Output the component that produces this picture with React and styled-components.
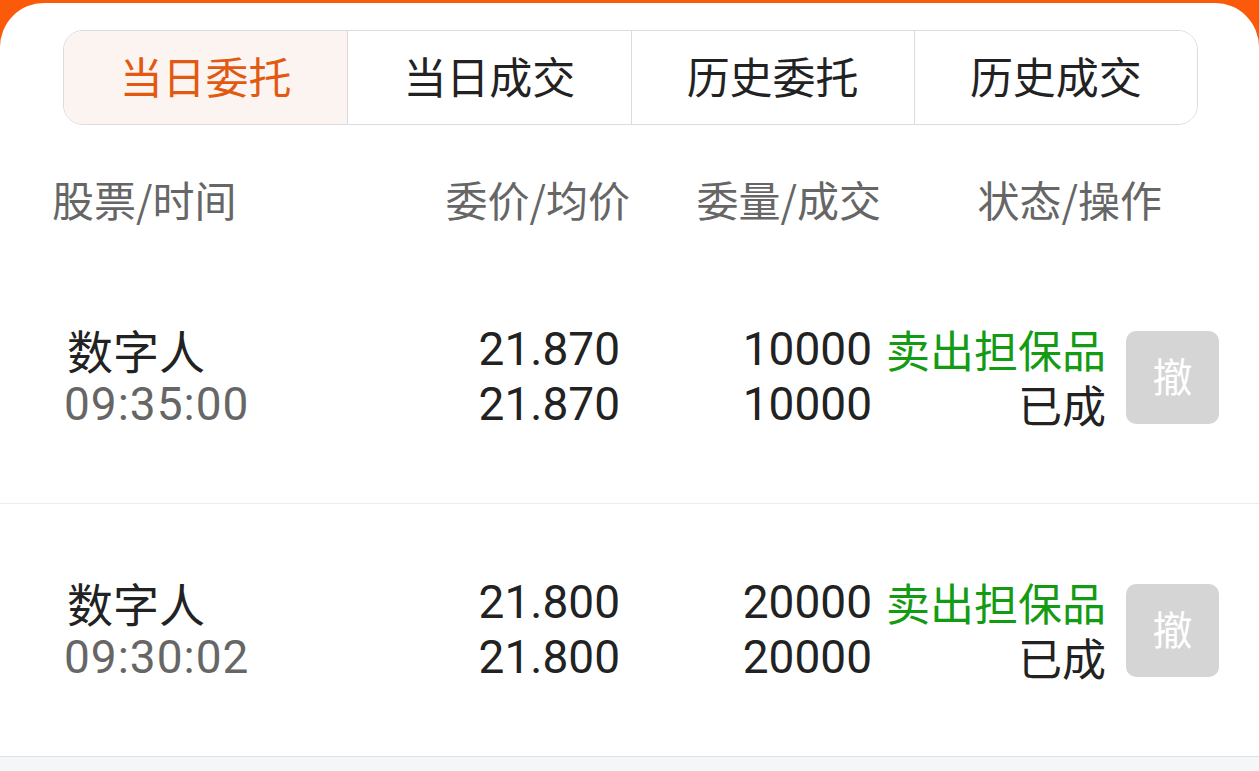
import React from "react";
import styled, { createGlobalStyle } from "styled-components";

const Global = createGlobalStyle`
  html, body { margin: 0; padding: 0; background: #fa5a0a; }
  body { font-family: Roboto, "Noto Sans CJK SC", sans-serif; -webkit-font-smoothing: antialiased; }
  * { box-sizing: border-box; }
`;

const Page = styled.div`
  width: 1259px;
  height: 771px;
  padding-top: 3px;
  background: #fa5a0a;
  overflow: hidden;
`;

const Panel = styled.div`
  height: 768px;
  background: #fff;
  border-radius: 44px 44px 0 0;
  display: flex;
  flex-direction: column;
  padding-top: 27px;
`;

const Tabs = styled.div`
  margin: 0 61px 0 63px;
  height: 95px;
  border: 1px solid #dcdcdf;
  border-radius: 20px;
  display: grid;
  grid-template-columns: repeat(4, 1fr);
  overflow: hidden;
`;

const Tab = styled.div`
  display: flex;
  align-items: center;
  justify-content: center;
  padding-bottom: 5px;
  font-family: "Noto Sans CJK SC", sans-serif;
  font-size: 43px;
  color: ${p => (p.$active ? "#e25a12" : "#222")};
  background: ${p => (p.$active ? "#fcf4f1" : "#fff")};
  border-left: ${p => (p.$first ? "none" : "1px solid #dcdcdf")};
`;

const Header = styled.div`
  height: 126px;
  display: grid;
  grid-template-columns: 348px 230px 251px 281px;
  padding: 20px 0 0 52px;
  align-items: center;
  font-family: "Noto Sans CJK SC", sans-serif;
  font-size: 42px;
  color: #666;
`;

const HeadCell = styled.div`
  text-align: ${p => (p.$left ? "left" : "right")};
  white-space: nowrap;
`;

const Row = styled.div`
  height: 253px;
  display: grid;
  grid-template-columns: 336px 220px 252px 234px 113px;
  padding-left: 64px;
  align-items: center;
  border-bottom: 1px solid ${p => (p.$last ? "#e2e2e2" : "#ececec")};
`;

const Cell = styled.div`
  display: flex;
  flex-direction: column;
  align-items: ${p => (p.$left ? "flex-start" : "flex-end")};
`;

const Line = styled.div`
  height: 55px;
  line-height: 55px;
  font-size: ${p => p.$size || 46}px;
  color: ${p => p.$color || "#222"};
  letter-spacing: ${p => p.$spacing || 0}px;
  font-family: ${p => (p.$cjk ? `"Noto Sans CJK SC", sans-serif` : `Roboto, "Noto Sans CJK SC", sans-serif`)};
  white-space: nowrap;
  padding-left: ${p => p.$indent || 0}px;
`;

const BtnCol = styled.div`
  display: flex;
  justify-content: flex-end;
`;

const CancelBtn = styled.div`
  width: 93px;
  height: 93px;
  flex: none;
  border-radius: 10px;
  background: #d5d5d5;
  color: #fff;
  font-family: "Noto Sans CJK SC", sans-serif;
  font-size: 40px;
  display: flex;
  align-items: center;
  justify-content: center;
  padding-bottom: 4px;
`;

const Footer = styled.div`
  flex: 1;
  background: #f5f6f8;
`;

const orders = [
  { name: "数字人", time: "09:35:00", price: "21.870", avg: "21.870", qty: "10000", done: "10000" },
  { name: "数字人", time: "09:30:02", price: "21.800", avg: "21.800", qty: "20000", done: "20000" },
];

export default function App() {
  return (
    <Page>
      <Global />
      <Panel>
        <Tabs>
          <Tab $active $first>当日委托</Tab>
          <Tab>当日成交</Tab>
          <Tab>历史委托</Tab>
          <Tab>历史成交</Tab>
        </Tabs>
        <Header>
          <HeadCell $left>股票/时间</HeadCell>
          <HeadCell>委价/均价</HeadCell>
          <HeadCell>委量/成交</HeadCell>
          <HeadCell>状态/操作</HeadCell>
        </Header>
        {orders.map((o, i) => (
          <Row key={i} $last={i === orders.length - 1}>
            <Cell $left>
              <Line $cjk $indent={3}>{o.name}</Line>
              <Line $color="#666" $spacing={1}>{o.time}</Line>
            </Cell>
            <Cell>
              <Line>{o.price}</Line>
              <Line>{o.avg}</Line>
            </Cell>
            <Cell>
              <Line>{o.qty}</Line>
              <Line>{o.done}</Line>
            </Cell>
            <Cell>
              <Line $cjk $size={44} $color="#139b13">卖出担保品</Line>
              <Line $cjk $size={44}>已成</Line>
            </Cell>
            <BtnCol>
              <CancelBtn>撤</CancelBtn>
            </BtnCol>
          </Row>
        ))}
        <Footer />
      </Panel>
    </Page>
  );
}
